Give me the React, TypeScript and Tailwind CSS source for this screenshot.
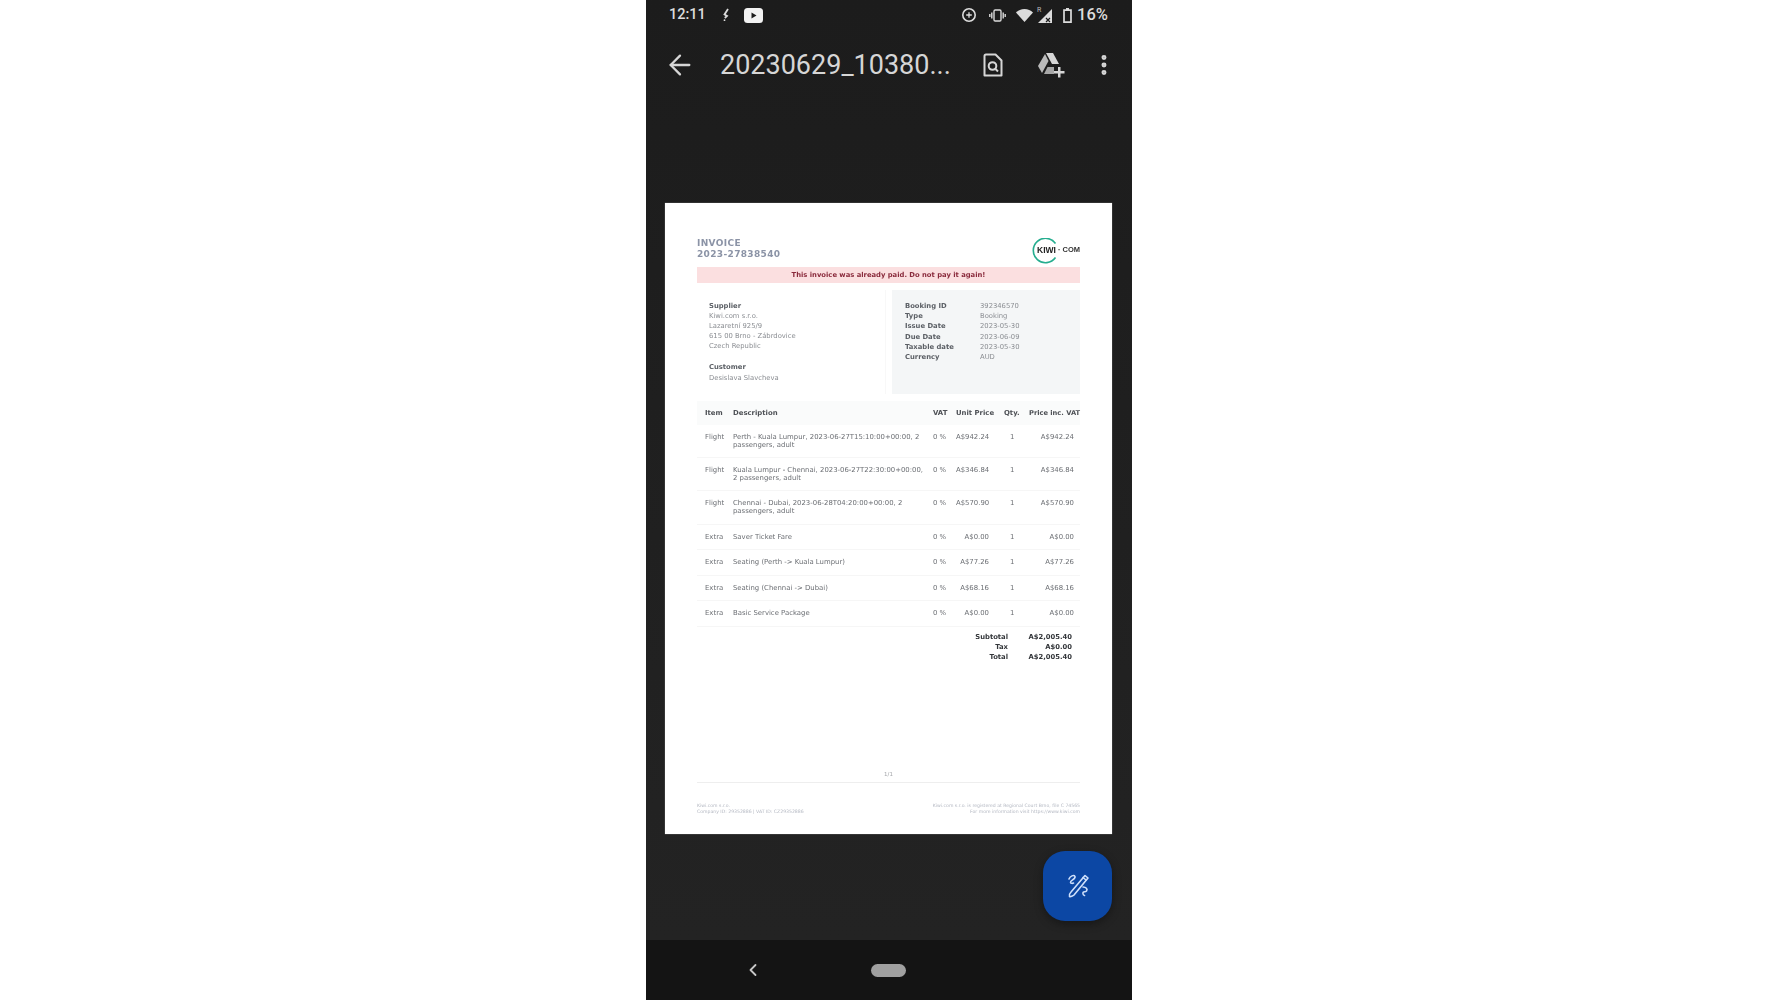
import React from "react";
import { ArrowLeft, ChevronLeft, MoreVertical } from "lucide-react";

const docFont = { fontFamily: '"DejaVu Sans", sans-serif' };

interface RowData {
  item: string;
  lines: string[];
  unit: string;
  h: string;
}

const rows: RowData[] = [
  { item: "Flight", lines: ["Perth - Kuala Lumpur, 2023-06-27T15:10:00+00:00, 2", "passengers, adult"], unit: "A$942.24", h: "h-[33px]" },
  { item: "Flight", lines: ["Kuala Lumpur - Chennai, 2023-06-27T22:30:00+00:00,", "2 passengers, adult"], unit: "A$346.84", h: "h-[33px]" },
  { item: "Flight", lines: ["Chennai - Dubai, 2023-06-28T04:20:00+00:00, 2", "passengers, adult"], unit: "A$570.90", h: "h-[34px]" },
  { item: "Extra", lines: ["Saver Ticket Fare"], unit: "A$0.00", h: "h-[25px]" },
  { item: "Extra", lines: ["Seating (Perth -> Kuala Lumpur)"], unit: "A$77.26", h: "h-[26px]" },
  { item: "Extra", lines: ["Seating (Chennai -> Dubai)"], unit: "A$68.16", h: "h-[25px]" },
  { item: "Extra", lines: ["Basic Service Package"], unit: "A$0.00", h: "h-[26px]" },
];

const gridCols = "grid grid-cols-[28px_200px_23px_48px_25px_51px]";

function StatusBar() {
  return (
    <div className="flex h-[30px] items-center justify-between pl-[23px] pr-[24px] text-[#dcdcdc]" style={{ fontFamily: "Roboto, sans-serif" }}>
      <div className="flex items-center">
        <span className="text-[14.500px] font-medium">12:11</span>
        <svg className="ml-[16px]" width="8" height="14" viewBox="0 0 8 14" fill="none" stroke="currentColor" strokeWidth="1.800">
          <path d="M6 1 2.500 6.500 5 8 2.800 10" />
          <circle cx="2.500" cy="12.200" r="0.900" fill="currentColor" stroke="none" />
        </svg>
        <svg className="ml-[14px]" width="19" height="15" viewBox="0 0 19 15">
          <rect width="19" height="15" rx="3.500" fill="#f2f2f2" />
          <path d="M7.500 4.500 12.500 7.500 7.500 10.500z" fill="#1c1c1c" />
        </svg>
      </div>
      <div className="flex items-center">
        <svg width="16" height="16" viewBox="0 0 16 16" fill="none" stroke="currentColor" strokeWidth="1.600">
          <circle cx="8" cy="8" r="6.200" />
          <path d="M8 5.200v5.600M5.200 8h5.600" strokeWidth="1.300" />
        </svg>
        <svg className="ml-[12px]" width="17" height="13" viewBox="0 0 17 13" fill="none" stroke="currentColor" strokeWidth="1.400">
          <rect x="5" y="1" width="7" height="11" rx="1.200" />
          <path d="M2.800 3.500v6M.8 5v3M14.200 3.500v6M16.200 5v3" />
        </svg>
        <svg className="ml-[10px]" width="17" height="13" viewBox="0 0 17 13" fill="currentColor">
          <path d="M8.500 13 0 3.400C2.200 1.300 5.200 0 8.500 0S14.800 1.300 17 3.400z" />
        </svg>
        <div className="relative ml-[4px] h-[16px] w-[15px]">
          <span className="absolute left-0 top-[-2px] text-[7px] text-[#bdbdbd]">R</span>
          <svg className="absolute bottom-0 right-0" width="14" height="14" viewBox="0 0 14 14" fill="currentColor">
            <path d="M14 0v14H0z" />
            <path d="M8 9l4 4M12 9l-4 4" stroke="#1c1c1c" strokeWidth="1.200" />
          </svg>
        </div>
        <svg className="ml-[11px]" width="9" height="15" viewBox="0 0 9 15" fill="none" stroke="currentColor" strokeWidth="1.700">
          <path d="M3 .8h3M1 2.200h7v12H1z" />
        </svg>
        <span className="ml-[5px] text-[16.500px] font-medium leading-none">16%</span>
      </div>
    </div>
  );
}

function Toolbar() {
  return (
    <div className="mt-[6px] flex h-[58px] items-center pl-[18px] text-[#d6d6d6]" style={{ fontFamily: "Roboto, sans-serif" }}>
      <ArrowLeft size={32} strokeWidth={1.700} />
      <div className="ml-[24px] w-[263px] text-[27px] leading-none">20230629_10380...</div>
      <svg width="20" height="24" viewBox="0 0 20 24" fill="none" stroke="currentColor" strokeWidth="2">
        <path d="M3 1.500h9.500l6 6V22.500H1.500v-19.500q0-1.500 1.500-1.500z" strokeLinejoin="round" />
        <circle cx="9.500" cy="13" r="3.800" />
        <path d="M12.500 16l2.500 2.500" />
      </svg>
      <svg className="ml-[34px]" width="28" height="26" viewBox="0 0 28 26" fill="currentColor">
        <path d="M9 1h7l6 11h-7z" />
        <path d="M8 2 1 14l4 7 6.500-12z" opacity="0.85" />
        <path d="M7 22l3.500-7H17v7z" opacity="0.75" />
        <path d="M21 15h2.500v4H27.500v2.500H23.500v4H21v-4H17v-2.500h4z" />
      </svg>
      <MoreVertical className="ml-[26px]" size={26} strokeWidth={2.600} />
    </div>
  );
}

function KiwiLogo() {
  return (
    <div className="relative h-[26px] w-[48px]">
      <svg className="absolute left-0 top-0" width="28" height="26" viewBox="0 0 28 26" fill="none" stroke="#25ad8f" strokeWidth="1.600">
        <path d="M23.500 5.500A12.200 12.200 0 1 0 23.500 19.500" />
      </svg>
      <span className="absolute left-[5px] top-[7px] text-[8.500px] font-bold leading-[10px] text-[#222]" style={{ fontFamily: '"Liberation Sans", sans-serif' }}>
        KIWI
      </span>
      <span className="absolute right-0 top-[7px] text-[7.500px] font-bold leading-[10px] text-[#333]" style={{ fontFamily: '"Liberation Sans", sans-serif' }}>
        · COM
      </span>
    </div>
  );
}

function InfoRow({ label, value }: { label: string; value: string }) {
  return (
    <div className="flex h-[10.200px] items-center">
      <span className="w-[75px] font-bold text-[#5c6066]">{label}</span>
      <span className="text-[#8a8d92]">{value}</span>
    </div>
  );
}

function Invoice() {
  return (
    <div className="h-[631px] bg-white px-[32px] pt-[35px] shadow-[0_0_1px_#999] blur-[0.3px]" style={docFont}>
      <div className="flex h-[29px] items-start justify-between">
        <div className="text-[9px] font-bold leading-[10.500px] tracking-[0.350px] text-[#8b93a6]">
          <div>INVOICE</div>
          <div>2023-27838540</div>
        </div>
        <KiwiLogo />
      </div>
      <div className="flex h-[16px] items-center justify-center bg-[#fbdfe0] text-[6.800px] font-bold text-[#8a2a3c]">
        This invoice was already paid. Do not pay it again!
      </div>
      <div className="mt-[7px] flex h-[104px] text-[6.800px] leading-[10.100px]">
        <div className="w-[189px] border-r border-[#f8f8f8] pl-[12px] pt-[11px] text-[#8a8d92]">
          <div className="font-bold text-[#5c6066]">Supplier</div>
          <div>Kiwi.com s.r.o.</div>
          <div>Lazaretní 925/9</div>
          <div>615 00 Brno - Zábrdovice</div>
          <div>Czech Republic</div>
          <div className="mt-[12px] font-bold leading-[9.500px] text-[#5c6066]">Customer</div>
          <div>Desislava Slavcheva</div>
        </div>
        <div className="ml-[6px] flex-1 bg-[#f4f6f7] pl-[13px] pt-[11px]">
          <InfoRow label="Booking ID" value="392346570" />
          <InfoRow label="Type" value="Booking" />
          <InfoRow label="Issue Date" value="2023-05-30" />
          <InfoRow label="Due Date" value="2023-06-09" />
          <InfoRow label="Taxable date" value="2023-05-30" />
          <InfoRow label="Currency" value="AUD" />
        </div>
      </div>
      <div className={`${gridCols} mt-[7px] h-[24px] items-center whitespace-nowrap bg-[#fafbfb] pl-[8px] text-[6.900px] font-bold text-[#4d5055]`}>
        <span>Item</span>
        <span>Description</span>
        <span>VAT</span>
        <span>Unit Price</span>
        <span>Qty.</span>
        <span className="text-[6.700px]">Price inc. VAT</span>
      </div>
      <div className="text-[6.900px] leading-[8px] text-[#6b6e73]">
        {rows.map((r) => (
          <div key={r.lines[0]} className={`${gridCols} ${r.h} items-start whitespace-nowrap border-b border-[#f6f6f6] pl-[8px] pt-[8px]`}>
            <span>{r.item}</span>
            <div>
              {r.lines.map((l) => (
                <div key={l}>{l}</div>
              ))}
            </div>
            <span>0 %</span>
            <span className="pr-[15px] text-right">{r.unit}</span>
            <span className="pl-[6px]">1</span>
            <span className="pr-[6px] text-right">{r.unit}</span>
          </div>
        ))}
      </div>
      <div className="mt-[6px] flex justify-end pr-[8px] text-[6.800px] font-bold leading-[9.900px] text-[#33363a]">
        <div className="text-right">
          <div>Subtotal</div>
          <div>Tax</div>
          <div>Total</div>
        </div>
        <div className="w-[64px] text-right">
          <div>A$2,005.40</div>
          <div>A$0.00</div>
          <div>A$2,005.40</div>
        </div>
      </div>
      <div className="mt-[107px] text-center text-[5.500px] leading-[8px] text-[#a5a7ab]">1/1</div>
      <div className="mt-[4px] border-t border-[#eeeeee] pt-[20px]">
        <div className="flex justify-between text-[4.600px] leading-[6.500px] text-[#b4b8c2]">
          <div>
            <div>Kiwi.com s.r.o.</div>
            <div>Company ID: 29352886 | VAT ID: CZ29352886</div>
          </div>
          <div className="text-right">
            <div>Kiwi.com s.r.o. is registered at Regional Court Brno, file C 74565</div>
            <div>For more information visit https://www.kiwi.com</div>
          </div>
        </div>
      </div>
    </div>
  );
}

function SignFab() {
  return (
    <div className="flex h-[70px] w-[69px] items-center justify-center rounded-[22px] bg-[#0c47a4] shadow-[0_3px_8px_rgba(0,0,0,0.35)]">
      <svg width="24" height="26" viewBox="0 0 24 26" fill="none" stroke="#cfe0fb" strokeWidth="1.600" strokeLinecap="round" strokeLinejoin="round">
        <path d="M3 6c1-3 5-4.500 6-2.500 1 2.500-5 4-4.500 6 .3 1 2 1 3 .5" />
        <path d="M19 2.500 22 5 8 22c-1 1-3.500 2-4.500 1.500C3 22 4 20 5 19z" />
        <path d="M17 4.500 20 7" fill="#cfe0fb" />
        <path d="M17 14c3 0 5 2 3.500 4-1 1-2 .5-3 1-.8.500-1 3 1 3.500" />
      </svg>
    </div>
  );
}

export default function App() {
  return (
    <div className="flex h-screen justify-center overflow-hidden bg-white">
      <div className="flex h-[1000px] w-[486px] flex-col bg-[#212121]">
        <div className="h-[940px] bg-gradient-to-b from-[#1c1c1c] to-[#232323]">
          <StatusBar />
          <Toolbar />
          <div className="mt-[109px] pl-[19px] pr-[20px]">
            <Invoice />
          </div>
          <div className="mt-[17px] flex justify-end pr-[20px]">
            <SignFab />
          </div>
        </div>
        <div className="relative flex h-[60px] items-center justify-center bg-[#141414]">
          <ChevronLeft className="absolute left-[97px] text-[#c8c8c8]" size={20} strokeWidth={2.200} />
          <div className="mr-[1px] h-[13px] w-[35px] rounded-full bg-[#a0a0a0]" />
        </div>
      </div>
    </div>
  );
}
